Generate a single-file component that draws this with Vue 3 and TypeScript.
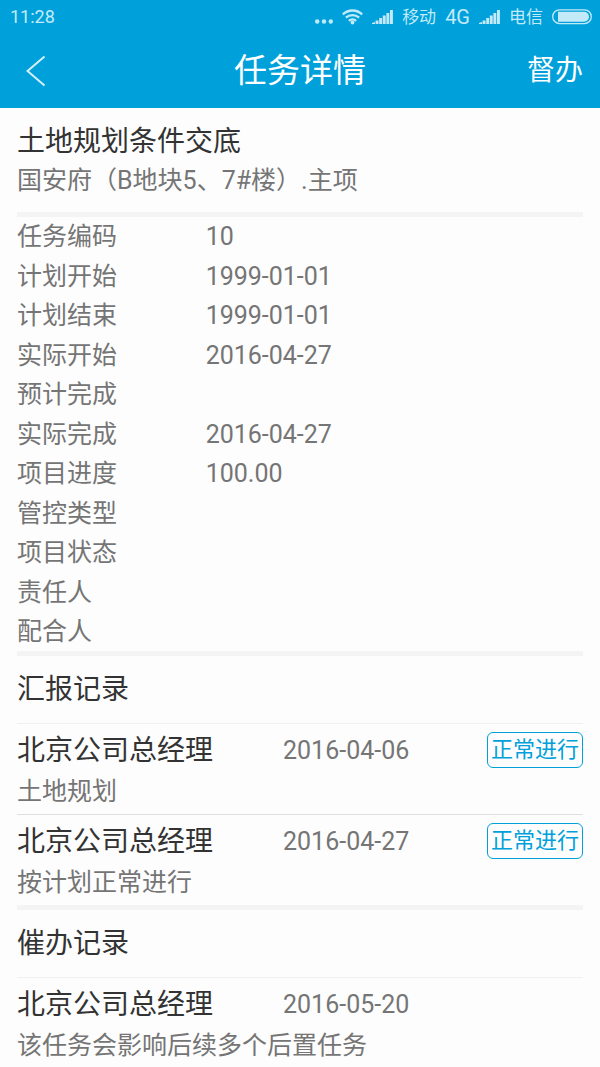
<script setup lang="ts">
interface Field {
  label: string
  value: string
}

interface LogEntry {
  author: string
  date: string
  note: string
  status?: string
}

interface LogSection {
  title: string
  entries: LogEntry[]
}

const fields: Field[] = [
  { label: '任务编码', value: '10' },
  { label: '计划开始', value: '1999-01-01' },
  { label: '计划结束', value: '1999-01-01' },
  { label: '实际开始', value: '2016-04-27' },
  { label: '预计完成', value: '' },
  { label: '实际完成', value: '2016-04-27' },
  { label: '项目进度', value: '100.00' },
  { label: '管控类型', value: '' },
  { label: '项目状态', value: '' },
  { label: '责任人', value: '' },
  { label: '配合人', value: '' },
]

const sections: LogSection[] = [
  {
    title: '汇报记录',
    entries: [
      { author: '北京公司总经理', date: '2016-04-06', note: '土地规划', status: '正常进行' },
      { author: '北京公司总经理', date: '2016-04-27', note: '按计划正常进行', status: '正常进行' },
    ],
  },
  {
    title: '催办记录',
    entries: [{ author: '北京公司总经理', date: '2016-05-20', note: '该任务会影响后续多个后置任务' }],
  },
]
</script>

<template>
  <div class="page">
    <header class="top">
      <div class="status">
        <span class="clock">11:28</span>
        <svg width="18" height="16" viewBox="0 0 18 16" aria-hidden="true">
          <g fill="currentColor">
            <circle cx="2.200" cy="12.500" r="2.200" />
            <circle cx="9" cy="12.500" r="2.200" />
            <circle cx="15.800" cy="12.500" r="2.200" />
          </g>
        </svg>
        <svg width="21" height="16" viewBox="0 0 21 16" aria-hidden="true">
          <g fill="none" stroke="currentColor" stroke-width="2.300">
            <path d="M.8 5.400a14 14 0 0 1 19.400 0" />
            <path d="M3.900 8.700a9.600 9.600 0 0 1 13.200 0" />
            <path d="M6.900 11.900a5.200 5.200 0 0 1 7.200 0" />
          </g>
          <circle cx="10.500" cy="13.500" r="1.900" fill="currentColor" />
        </svg>
        <svg width="21" height="16" viewBox="0 0 21 16" aria-hidden="true">
          <path fill="currentColor" d="M0 15v-1l3-1v2zM3.600 15v-3.500h2.900v3.500zM7.200 15v-6h2.900v6zM10.800 15v-8.500h2.900v8.500zM14.400 15v-11h2.900v11zM18 15v-14h2.900v14z" />
        </svg>
        <span class="carrier">移动</span>
        <span class="network">4G</span>
        <svg width="21" height="16" viewBox="0 0 21 16" aria-hidden="true">
          <path fill="currentColor" d="M0 15v-1l3-1v2zM3.600 15v-3.500h2.900v3.500zM7.200 15v-6h2.900v6zM10.800 15v-8.500h2.900v8.500zM14.400 15v-11h2.900v11zM18 15v-14h2.900v14z" />
        </svg>
        <span class="carrier">电信</span>
        <svg width="40" height="16" viewBox="0 0 40 16" aria-hidden="true">
          <rect x=".7" y=".8" width="38.600" height="13.800" rx="6.900" fill="none" stroke="currentColor" stroke-width="1.300" />
          <path fill="currentColor" d="M6 2.700h26a5 5 0 0 1 0 10h-26z" />
        </svg>
      </div>
      <nav class="bar">
        <button class="back" type="button" aria-label="返回">
          <svg width="20" height="32" viewBox="0 0 20 32" aria-hidden="true">
            <path d="M18.500 1.500L1.500 16L18.500 30.500" fill="none" stroke="currentColor" stroke-width="2" />
          </svg>
        </button>
        <h1>任务详情</h1>
        <button class="urge" type="button">督办</button>
      </nav>
    </header>

    <main>
      <section class="summary">
        <h2>土地规划条件交底</h2>
        <p>国安府（B地块5、7#楼）.主项</p>
      </section>

      <dl class="fields">
        <div v-for="field in fields" :key="field.label" class="field">
          <dt>{{ field.label }}</dt>
          <dd>{{ field.value }}</dd>
        </div>
      </dl>

      <section v-for="section in sections" :key="section.title" class="log">
        <h2>{{ section.title }}</h2>
        <ul>
          <li v-for="entry in section.entries" :key="entry.date">
            <div class="entry">
              <h3>{{ entry.author }}</h3>
              <time :datetime="entry.date">{{ entry.date }}</time>
              <span v-if="entry.status" class="tag">{{ entry.status }}</span>
            </div>
            <p>{{ entry.note }}</p>
          </li>
        </ul>
      </section>
    </main>
  </div>
</template>

<style>
body {
  margin: 0;
  background: #fdfdfd;
}
</style>

<style scoped>
.page {
  font-family: Roboto, 'Noto Sans CJK SC', sans-serif;
  font-size: 25px;
  line-height: 40px;
  color: #757575;
}

h1,
h2,
h3,
p,
dl,
dd,
ul {
  margin: 0;
  padding: 0;
  font-weight: 400;
}

ul {
  list-style: none;
}

.top {
  background: #00a1db;
  color: #fff;
}

.status {
  display: flex;
  align-items: center;
  gap: 9px;
  height: 34px;
  padding: 0 8px 0 10px;
  color: #c3eaf8;
  line-height: 24px;
}

.status svg {
  flex: none;
}

.clock {
  margin-right: auto;
  font-size: 18px;
}

.carrier {
  font-size: 17px;
}

.network {
  font-size: 20px;
}

.bar {
  display: grid;
  grid-template-columns: 1fr auto 1fr;
  align-items: center;
  height: 74px;
  padding: 0 17px;
}

.bar h1 {
  font-size: 33px;
}

.bar button {
  padding: 0;
  border: 0;
  background: none;
  color: inherit;
  font: inherit;
  cursor: pointer;
}

.bar .back {
  display: flex;
  justify-self: start;
  padding-left: 9px;
  color: #d5f0fa;
}

.bar .urge {
  justify-self: end;
  font-size: 28px;
}

main {
  padding: 0 17px;
}

h2,
h3 {
  font-size: 28px;
  color: #333;
}

.summary {
  padding: 14px 0 12px;
}

.summary p {
  line-height: 38px;
}

.fields {
  display: grid;
  align-content: space-between;
  min-height: 434px;
  border-top: 5px solid #f4f4f4;
}

.field {
  display: grid;
  grid-template-columns: 1fr 2fr;
  line-height: 39px;
}

.log {
  border-top: 5px solid #f4f4f4;
}

.log h2 {
  line-height: 67px;
}

li {
  padding: 6px 0 2px;
  border-top: 1px solid #dfdfdf;
}

li:first-child {
  border-top-color: #f0f0f0;
}

.log:last-child li:last-child {
  padding-bottom: 0;
}

.entry {
  display: grid;
  grid-template-columns: 47% 1fr auto;
  align-items: center;
  line-height: 42px;
}

.tag {
  align-self: start;
  margin-top: 2px;
  padding: 0 3px;
  border: 1px solid #00a1db;
  border-radius: 6px;
  font-size: 22px;
  line-height: 34px;
  color: #00a1db;
}
</style>
